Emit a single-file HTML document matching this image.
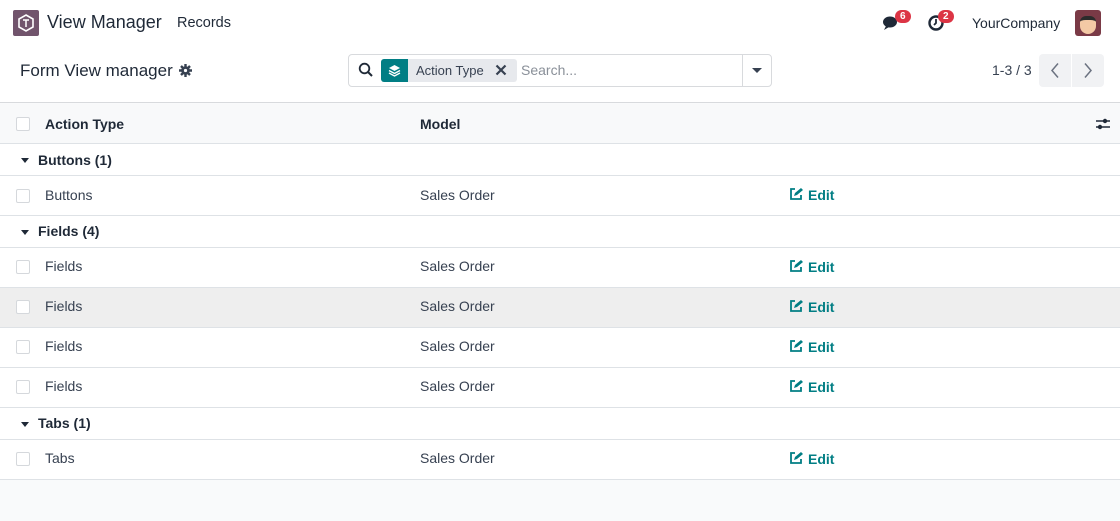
<!DOCTYPE html>
<html><head><style>
*{box-sizing:border-box;margin:0;padding:0}
body{width:1120px;height:521px;overflow:hidden;background:#f9fafb;font-family:"Liberation Sans",sans-serif;font-size:14px;color:#374151;position:relative}
.top{position:absolute;left:0;top:0;width:1120px;height:103px;background:#fff;border-bottom:1px solid #d8dadd}
.a{position:absolute;white-space:nowrap}
.row{position:absolute;left:0;width:1120px;background:#fff;border-bottom:1px solid #dee2e6}
.cb{position:absolute;left:16px;width:14px;height:14px;border:1px solid #d5d8dc;border-radius:2px;background:#fff}
.edit{color:#017e84;font-weight:bold;position:absolute;left:789px}
.edit svg{vertical-align:-1px;margin-right:5px}
.g{font-weight:bold;color:#1f2937}
</style></head><body>
<svg width="0" height="0" style="position:absolute"><symbol id="pe" viewBox="0 0 14 14"><path d="M6 2H2v10h10V8" fill="none" stroke="#017e84" stroke-width="1.8"/><path d="M5 9l1-3 6-5 2 2-6 5z" fill="#017e84"/></symbol></svg>
<div class="top">
 <div class="a" style="left:13px;top:10px;width:26px;height:26px;background:#71546c;border-radius:2px">
  <svg width="26" height="26" viewBox="0 0 26 26"><path d="M13 5l7 4v8l-7 4-7-4V9z" fill="none" stroke="#fff" stroke-width="1.6"/><path d="M10 10h6M13 10v7" stroke="#fff" stroke-width="1.5"/></svg></div>
 <div class="a" style="left:47px;top:12px;font-size:18px;color:#1f2937">View Manager</div>
 <div class="a" style="left:177px;top:15px;font-size:14.5px;color:#1f2937">Records</div>
 <svg class="a" style="left:882px;top:14px" width="20" height="18" viewBox="0 0 20 18"><ellipse cx="8" cy="8" rx="7" ry="5.5" fill="#1f2937"/><path d="M4 12l-2 4 5-3z" fill="#1f2937"/></svg>
 <div class="a" style="left:895px;top:10px;background:#dc3545;color:#fff;font-size:10px;font-weight:bold;border-radius:8px;padding:1px 5px">6</div>
 <svg class="a" style="left:927px;top:14px" width="18" height="18" viewBox="0 0 18 18"><circle cx="9" cy="9" r="6.5" fill="none" stroke="#1f2937" stroke-width="2.4"/><path d="M9 5v4l-2 2" stroke="#1f2937" stroke-width="1.8" fill="none"/></svg>
 <div class="a" style="left:938px;top:10px;background:#dc3545;color:#fff;font-size:10px;font-weight:bold;border-radius:8px;padding:1px 5px">2</div>
 <div class="a" style="left:972px;top:15px;font-size:14px;color:#1f2937">YourCompany</div>
 <div class="a" style="left:1075px;top:10px;width:26px;height:26px;background:#7a3a46;border-radius:3px;overflow:hidden"><div style="margin:6px 0 0 5px;width:16px;height:18px;background:#f3c9a5;border-radius:6px 6px 8px 8px;border-top:4px solid #2b2b2b"></div></div>
 <div class="a" style="left:20px;top:61px;font-size:17px;color:#1f2937">Form View manager</div>
 <svg class="a" style="left:179px;top:64px" width="13" height="13" viewBox="0 0 13 13"><circle cx="6.5" cy="6.5" r="4.3" fill="#374151"/><g stroke="#374151" stroke-width="2.4"><path d="M6.5 0v13M0 6.5h13M2 2l9 9M11 2l-9 9"/></g><circle cx="6.5" cy="6.5" r="1.6" fill="#fff"/></svg>
 <div class="a" style="left:348px;top:54px;width:424px;height:33px;border:1px solid #d8dadd;border-radius:4px"></div>
 <div class="a" style="left:742px;top:55px;width:1px;height:31px;background:#d8dadd"></div>
 <svg class="a" style="left:358px;top:62px" width="16" height="16" viewBox="0 0 16 16"><circle cx="6.5" cy="6.5" r="4.8" fill="none" stroke="#1f2937" stroke-width="1.8"/><path d="M10 10l4 4" stroke="#1f2937" stroke-width="2"/></svg>
 <div class="a" style="left:381px;top:59px;width:136px;height:23px;background:#e7e9ed;border-radius:3px"></div>
 <div class="a" style="left:381px;top:59px;width:27px;height:23px;background:#017e84;border-radius:3px 0 0 3px"></div>
 <svg class="a" style="left:387px;top:63px" width="15" height="15" viewBox="0 0 15 15"><path d="M7.5 2l5.5 3-5.5 3-5.5-3z" fill="#fff"/><path d="M2 7.5l5.5 3 5.5-3M2 10l5.5 3 5.5-3" stroke="#fff" stroke-width="1.4" fill="none"/></svg>
 <div class="a" style="left:416px;top:63px;font-size:13px;color:#374151">Action Type</div>
 <svg class="a" style="left:495px;top:64px" width="12" height="12" viewBox="0 0 12 12"><path d="M1.5 1.5l9 9M10.5 1.5l-9 9" stroke="#374151" stroke-width="2.2"/></svg>
 <div class="a" style="left:521px;top:62px;font-size:14px;color:#8a9099">Search...</div>
 <div class="a" style="left:752px;top:68px;border-left:5px solid transparent;border-right:5px solid transparent;border-top:5px solid #374151"></div>
 <div class="a" style="left:992px;top:62px;font-size:14px;color:#374151">1-3 / 3</div>
 <div class="a" style="left:1039px;top:54px;width:32px;height:33px;background:#f1f2f4;border-radius:4px 0 0 4px"></div>
 <div class="a" style="left:1072px;top:54px;width:32px;height:33px;background:#f1f2f4;border-radius:0 4px 4px 0"></div>
 <svg class="a" style="left:1050px;top:62px" width="10" height="17" viewBox="0 0 10 17"><path d="M8 1.5L2 8.5l6 7" fill="none" stroke="#6b7280" stroke-width="1.5"/></svg>
 <svg class="a" style="left:1083px;top:62px" width="10" height="17" viewBox="0 0 10 17"><path d="M2 1.5l6 7-6 7" fill="none" stroke="#6b7280" stroke-width="1.5"/></svg>
</div>
<div class="row" style="top:104px;height:40px;background:#f8f9fa"><div class="cb" style="top:13px"></div><div class="a g" style="left:45px;top:12px">Action Type</div><div class="a g" style="left:420px;top:12px">Model</div>
<svg class="a" style="left:1095px;top:12px" width="16" height="16" viewBox="0 0 16 16"><path d="M1 5h14M1 11h14" stroke="#1f2937" stroke-width="1.5"/><circle cx="10" cy="5" r="2.2" fill="#1f2937"/><circle cx="5" cy="11" r="2.2" fill="#1f2937"/></svg></div>

<div class="row" style="top:144px;height:32px"><div class="a" style="left:21px;top:14px;border-left:4.5px solid transparent;border-right:4.5px solid transparent;border-top:5px solid #1f2937"></div><div class="a g" style="left:38px;top:8px">Buttons (1)</div></div>
<div class="row" style="top:176px;height:40px"><div class="cb" style="top:13px"></div><div class="a" style="left:45px;top:11px">Buttons</div><div class="a" style="left:420px;top:11px">Sales Order</div><div class="edit" style="top:11px"><svg width="14" height="14"><use href="#pe"/></svg>Edit</div></div>
<div class="row" style="top:216px;height:32px"><div class="a" style="left:21px;top:14px;border-left:4.5px solid transparent;border-right:4.5px solid transparent;border-top:5px solid #1f2937"></div><div class="a g" style="left:38px;top:7px">Fields (4)</div></div>
<div class="row" style="top:248px;height:40px"><div class="cb" style="top:12px"></div><div class="a" style="left:45px;top:10px">Fields</div><div class="a" style="left:420px;top:10px">Sales Order</div><div class="edit" style="top:11px"><svg width="14" height="14"><use href="#pe"/></svg>Edit</div></div>
<div class="row" style="top:288px;height:40px;background:#eeeeee"><div class="cb" style="top:12px"></div><div class="a" style="left:45px;top:10px">Fields</div><div class="a" style="left:420px;top:10px">Sales Order</div><div class="edit" style="top:11px"><svg width="14" height="14"><use href="#pe"/></svg>Edit</div></div>
<div class="row" style="top:328px;height:40px"><div class="cb" style="top:12px"></div><div class="a" style="left:45px;top:10px">Fields</div><div class="a" style="left:420px;top:10px">Sales Order</div><div class="edit" style="top:11px"><svg width="14" height="14"><use href="#pe"/></svg>Edit</div></div>
<div class="row" style="top:368px;height:40px"><div class="cb" style="top:12px"></div><div class="a" style="left:45px;top:10px">Fields</div><div class="a" style="left:420px;top:10px">Sales Order</div><div class="edit" style="top:11px"><svg width="14" height="14"><use href="#pe"/></svg>Edit</div></div>
<div class="row" style="top:408px;height:32px"><div class="a" style="left:21px;top:14px;border-left:4.5px solid transparent;border-right:4.5px solid transparent;border-top:5px solid #1f2937"></div><div class="a g" style="left:38px;top:7px">Tabs (1)</div></div>
<div class="row" style="top:440px;height:40px"><div class="cb" style="top:12px"></div><div class="a" style="left:45px;top:10px">Tabs</div><div class="a" style="left:420px;top:10px">Sales Order</div><div class="edit" style="top:11px"><svg width="14" height="14"><use href="#pe"/></svg>Edit</div></div>
</body></html>
